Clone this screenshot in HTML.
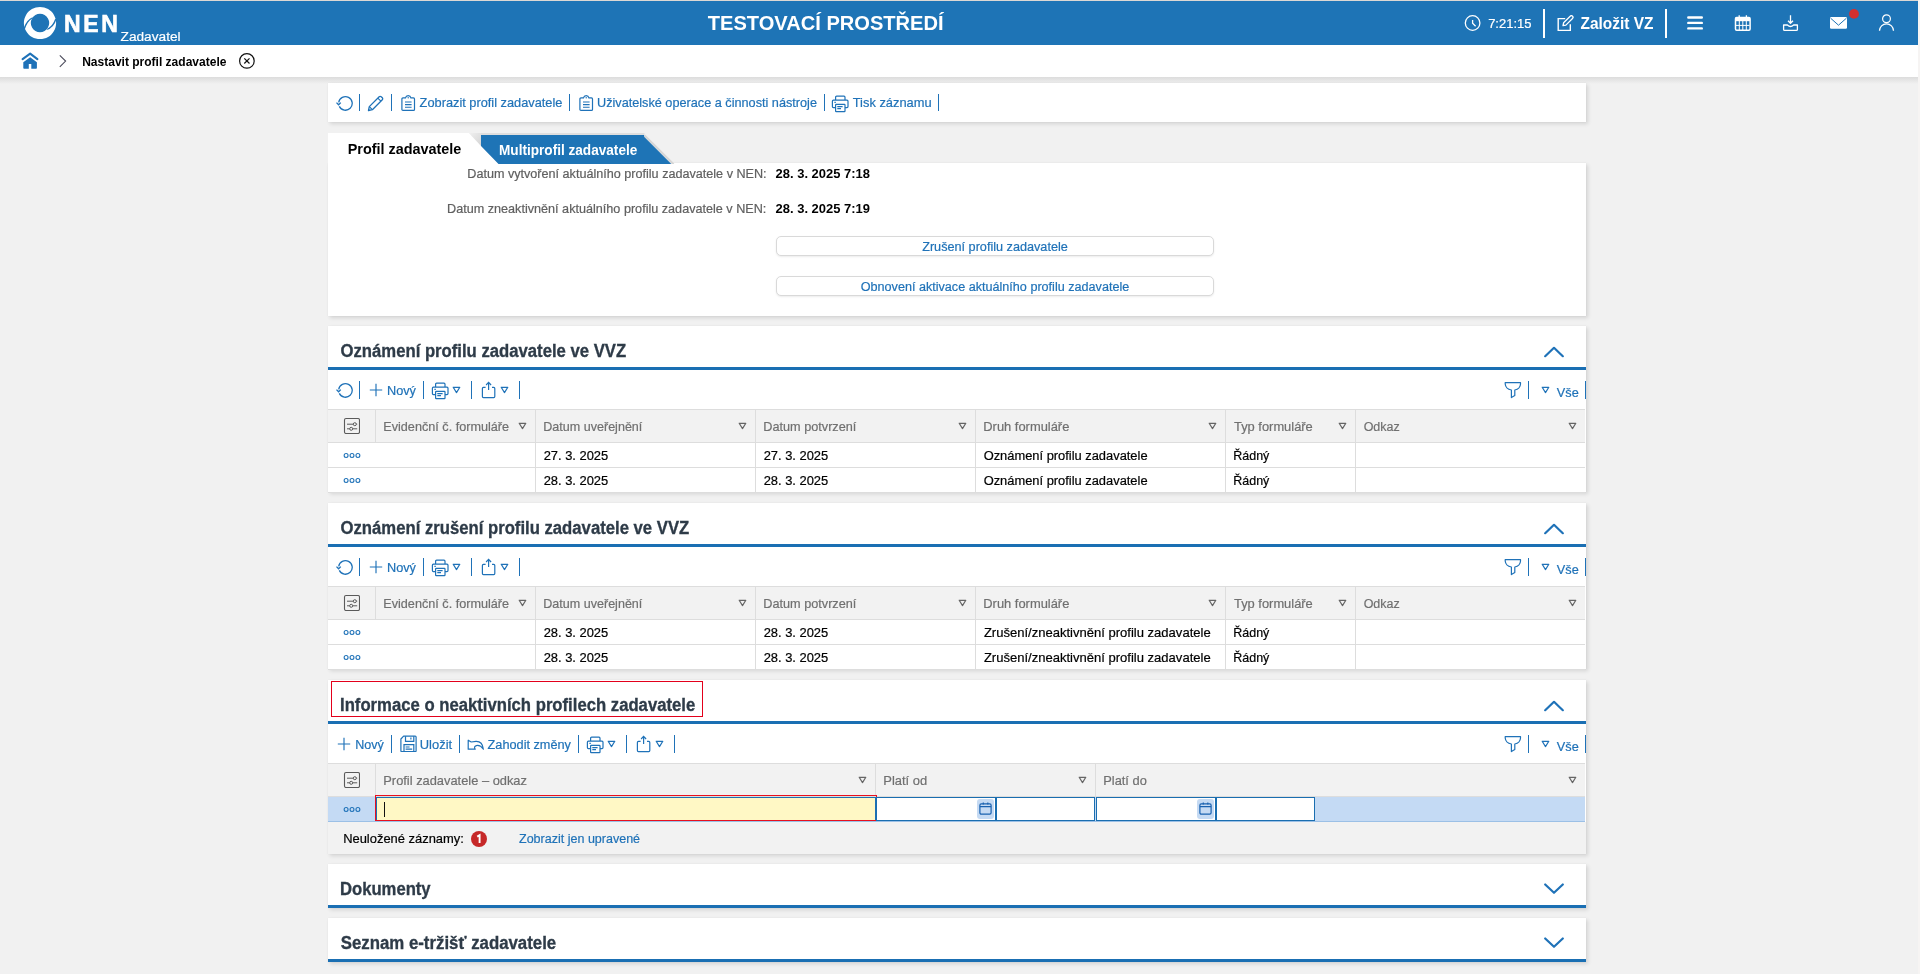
<!DOCTYPE html><html><head><meta charset="utf-8"><style>html,body{margin:0;padding:0;width:1920px;height:974px;overflow:hidden;font-family:"Liberation Sans",sans-serif;-webkit-font-smoothing:antialiased}#root{position:absolute;left:0;top:0;width:1920px;height:974px;will-change:transform}</style></head><body><div id="root"><div style="position:absolute;left:0;top:0;width:1920px;height:974px;background:#f1f1f1"></div>
<div style="position:absolute;left:0px;top:0px;width:1920px;height:1px;background:#dcd8d4"></div>
<div style="position:absolute;left:0px;top:1px;width:1918px;height:44px;background:#1e74b6"></div>
<div style="position:absolute;left:1918px;top:0px;width:2px;height:974px;background:#f6f4f3"></div>
<svg style="position:absolute;left:20px;top:4px" width="40" height="40" viewBox="0 0 40 40"><path fill="#fff" fill-rule="evenodd" d="M20 2.9a16.1 16.1 0 1 0 0.001 0zM20 9.8a9.2 9.2 0 1 0 0.001 0z"/><path d="M3.6 24.2 Q6.6 15.6 12.8 13.0 L12.2 14.6 Q7.4 17.6 4.8 25.4Z" fill="#1e74b6"/><path d="M36.4 15.6 Q33.8 24.2 26.8 25.9 L27.6 24.4 Q32.8 21.8 35.2 14.8Z" fill="#1e74b6"/></svg>
<div style="position:absolute;top:10px;font-size:23px;line-height:28px;font-weight:bold;color:#fff;white-space:nowrap;left:64.00px;letter-spacing:2.7px;-webkit-text-stroke:0.6px #fff;">NEN</div>
<div style="position:absolute;top:29px;font-size:13.67px;line-height:16px;font-weight:normal;color:#fff;white-space:nowrap;-webkit-text-stroke:0.2px #fff;left:120.59px;">Zadavatel</div>
<div style="position:absolute;top:11px;font-size:20.09px;line-height:24px;font-weight:bold;color:#fff;white-space:nowrap;left:707.80px;">TESTOVACÍ PROSTŘEDÍ</div>
<svg style="position:absolute;left:1464px;top:15px" width="17" height="17" viewBox="0 0 17 17"><circle cx="8.6" cy="8" r="7.3" stroke="#fff" stroke-width="1.3" fill="none"/><path d="M8.6 5V8.2L11.6 11.2" stroke="#fff" stroke-width="1.3" fill="none"/></svg>
<div style="position:absolute;top:16px;font-size:12.98px;line-height:16px;font-weight:normal;color:#fff;white-space:nowrap;-webkit-text-stroke:0.2px #fff;left:1488.15px;">7:21:15</div>
<div style="position:absolute;left:1543px;top:9px;width:2px;height:29px;background:#fff"></div>
<svg style="position:absolute;left:1557px;top:15px" width="17" height="17" viewBox="0 0 17 17"><path d="M8.2 3.6H1.2V15.4H13.3V9.2" stroke="#fff" stroke-width="1.4" fill="none"/><path d="M6 10.6L6.6 7.8L13.2 1.2A1.5 1.5 0 0 1 15.5 3.5L8.9 10.1Z" stroke="#fff" stroke-width="1.3" fill="none" stroke-linejoin="round"/></svg>
<div style="position:absolute;top:14px;font-size:15.45px;line-height:19px;font-weight:bold;color:#fff;white-space:nowrap;left:1580.54px;transform:scaleY(1.1);transform-origin:0 15px;">Založit VZ</div>
<div style="position:absolute;left:1665px;top:9px;width:2px;height:29px;background:#fff"></div>
<svg style="position:absolute;left:1686px;top:14px" width="18" height="17" viewBox="0 0 18 17"><path d="M2.3 3.5H15.8M2.3 8.9H15.8M2.3 14.4H15.8" stroke="#fff" stroke-width="2.4" stroke-linecap="round"/></svg>
<svg style="position:absolute;left:1733px;top:14px" width="19" height="18" viewBox="0 0 19 18"><rect x="2.5" y="3.6" width="14.6" height="12.6" rx="1.2" stroke="#fff" stroke-width="1.5" fill="none"/><rect x="2.5" y="3.6" width="14.6" height="3.6" fill="#fff"/><path d="M6.2 1.2V4M13.4 1.2V4" stroke="#fff" stroke-width="1.3"/><path d="M3 11.4H16.6M6.3 7V16M9.8 7V16M13.3 7V16" stroke="#fff" stroke-width="1"/></svg>
<svg style="position:absolute;left:1781px;top:14px" width="18" height="18" viewBox="0 0 18 18"><path d="M9.5 1.2V9.4M7 6.7L9.5 9.3L12 6.7" stroke="#fff" stroke-width="1.3" fill="none"/><path d="M2.6 11V15.4A1 1 0 0 0 3.6 16.4H15.4A1 1 0 0 0 16.4 15.4V11H12.6Q9.5 14 6.4 11Z" stroke="#fff" stroke-width="1.3" fill="none" stroke-linejoin="round"/></svg>
<svg style="position:absolute;left:1829px;top:16px" width="19" height="14" viewBox="0 0 19 14"><rect x="1" y="1" width="17" height="11.7" rx="1.2" fill="#fff"/><path d="M1.6 2.2L9.5 9.2L17.4 2.2" stroke="#1e74b6" stroke-width="1" fill="none"/></svg>
<svg style="position:absolute;left:1848px;top:8px" width="12" height="12" viewBox="0 0 12 12"><circle cx="6" cy="5.9" r="4.9" fill="#d32f2f"/></svg>
<svg style="position:absolute;left:1877px;top:14px" width="18" height="18" viewBox="0 0 18 18"><circle cx="9.5" cy="4.8" r="3.9" stroke="#fff" stroke-width="1.2" fill="none"/><path d="M2.5 16.8A7 7 0 0 1 16.5 16.8" stroke="#fff" stroke-width="1.3" fill="none"/></svg>
<div style="position:absolute;left:0px;top:45px;width:1918px;height:32px;background:#fff"></div>
<div style="position:absolute;left:0px;top:77px;width:1918px;height:7px;background:linear-gradient(#dcdcdc,#f1f1f1)"></div>
<svg style="position:absolute;left:21px;top:52px" width="18" height="18" viewBox="0 0 18 18"><path d="M1.6 7.2L9.15 1.7L16.4 7.2" stroke="#1f72b8" stroke-width="2.1" fill="none" stroke-linecap="round" stroke-linejoin="round"/><path d="M2.3 10.2L9.15 5.3L15.9 10.2V16A0.8 0.8 0 0 1 15.1 16.8H10.3V11.9H7.8V16.8H3.1A0.8 0.8 0 0 1 2.3 16Z" fill="#1f72b8"/></svg>
<svg style="position:absolute;left:57px;top:54px" width="12" height="14" viewBox="0 0 12 14"><path d="M2.8 1.3L8.6 7.1L2.8 12.8" stroke="#4a4a5a" stroke-width="1.1" fill="none"/></svg>
<div style="position:absolute;top:55px;font-size:12.02px;line-height:14px;font-weight:bold;color:#000;white-space:nowrap;left:82.16px;">Nastavit profil zadavatele</div>
<svg style="position:absolute;left:238px;top:52px" width="18" height="18" viewBox="0 0 18 18"><circle cx="8.9" cy="8.9" r="7.3" stroke="#111" stroke-width="1.2" fill="none"/><path d="M6.3 6.3L11.5 11.5M11.5 6.3L6.3 11.5" stroke="#111" stroke-width="1.2"/></svg>
<div style="position:absolute;left:328px;top:83px;width:1258px;height:39px;background:#fff;box-shadow:2px 2px 4px rgba(0,0,0,.12),0 0 1px rgba(0,0,0,.07)"></div>
<svg style="position:absolute;left:336px;top:95px" width="17" height="17" viewBox="0 0 17 17"><path d="M2.7 7.4A6.8 6.8 0 1 1 3.3 11.4" stroke="#1f72b8" stroke-width="1.3" fill="none"/><path d="M0.5 7.6L2.6 9.8L4.8 7.6" stroke="#1f72b8" stroke-width="1.3" fill="none"/></svg>
<div style="position:absolute;left:359px;top:94px;width:1px;height:17px;background:#1f72b8"></div>
<svg style="position:absolute;left:367px;top:95px" width="17" height="17" viewBox="0 0 17 17"><path d="M1.5 15.5L2.3 11.6L12.2 1.7A1.4 1.4 0 0 1 14.2 1.7L15.3 2.8A1.4 1.4 0 0 1 15.3 4.8L5.4 14.7Z" stroke="#1f72b8" stroke-width="1.3" fill="none" stroke-linejoin="round"/><path d="M10.8 3.1L13.9 6.2M2.6 11.9L5.1 14.4" stroke="#1f72b8" stroke-width="1.1"/></svg>
<div style="position:absolute;left:391px;top:94px;width:1px;height:17px;background:#1f72b8"></div>
<svg style="position:absolute;left:401px;top:94.5px" width="15" height="17" viewBox="0 0 15 17"><path d="M0.9 14.4V3.9A1 1 0 0 1 1.9 2.9H4.5Q5 0.7 7.2 0.7Q9.4 0.7 9.9 2.9H12.5A1 1 0 0 1 13.5 3.9V14.4A1 1 0 0 1 12.5 15.4H1.9A1 1 0 0 1 0.9 14.4Z" stroke="#1f72b8" stroke-width="1.2" fill="none"/><circle cx="7.2" cy="2.7" r="0.7" fill="#1f72b8"/><path d="M4 7H10.6M4 9.6H10.6M4 12.2H10.6" stroke="#1f72b8" stroke-width="1.1"/></svg>
<div style="position:absolute;top:95px;font-size:12.79px;line-height:15px;font-weight:normal;color:#1f72b8;white-space:nowrap;-webkit-text-stroke:0.2px #1f72b8;left:419.62px;">Zobrazit profil zadavatele</div>
<div style="position:absolute;left:569px;top:94px;width:1px;height:17px;background:#1f72b8"></div>
<svg style="position:absolute;left:579px;top:94.5px" width="15" height="17" viewBox="0 0 15 17"><path d="M0.9 14.4V3.9A1 1 0 0 1 1.9 2.9H4.5Q5 0.7 7.2 0.7Q9.4 0.7 9.9 2.9H12.5A1 1 0 0 1 13.5 3.9V14.4A1 1 0 0 1 12.5 15.4H1.9A1 1 0 0 1 0.9 14.4Z" stroke="#1f72b8" stroke-width="1.2" fill="none"/><circle cx="7.2" cy="2.7" r="0.7" fill="#1f72b8"/><path d="M4 7H10.6M4 9.6H10.6M4 12.2H10.6" stroke="#1f72b8" stroke-width="1.1"/></svg>
<div style="position:absolute;top:96px;font-size:12.7px;line-height:15px;font-weight:normal;color:#1f72b8;white-space:nowrap;-webkit-text-stroke:0.2px #1f72b8;left:596.98px;">Uživatelské operace a činnosti nástroje</div>
<div style="position:absolute;left:824px;top:94px;width:1px;height:17px;background:#1f72b8"></div>
<svg style="position:absolute;left:831px;top:94.6px" width="18" height="18" viewBox="0 0 18 18"><path d="M4.6 5.2V2.2A1 1 0 0 1 5.6 1.2H13A1 1 0 0 1 14 2.2V5.2M4.6 12.6H2.4A1 1 0 0 1 1.4 11.6V6.2A1 1 0 0 1 2.4 5.2H16A1 1 0 0 1 17 6.2V11.6A1 1 0 0 1 16 12.6H14" stroke="#1f72b8" stroke-width="1.2" fill="none"/><rect x="4.6" y="9.4" width="9.4" height="7.2" rx="0.6" stroke="#1f72b8" stroke-width="1.2" fill="none"/><path d="M6.3 11.6H11.6M6.3 13.6H10M3.4 7.4H4.8" stroke="#1f72b8" stroke-width="1.1"/></svg>
<div style="position:absolute;top:95px;font-size:12.86px;line-height:15px;font-weight:normal;color:#1f72b8;white-space:nowrap;-webkit-text-stroke:0.2px #1f72b8;left:852.74px;">Tisk záznamu</div>
<div style="position:absolute;left:938px;top:94px;width:1px;height:17px;background:#1f72b8"></div>
<div style="position:absolute;left:328px;top:163px;width:1258px;height:153px;background:#fff;box-shadow:2px 2px 4px rgba(0,0,0,.12),0 0 1px rgba(0,0,0,.07)"></div>
<svg style="position:absolute;left:328px;top:130px" width="360" height="34" viewBox="0 0 360 34"><defs><linearGradient id="tg" x1="0" y1="0" x2="1" y2="1"><stop offset="0" stop-color="#f0f0f0"/><stop offset="1" stop-color="#d4d4d4"/></linearGradient></defs><path d="M0 3H141L171 34H0Z" fill="#fff"/><path d="M141 3H153V16Z" fill="url(#tg)"/><path d="M153 3H316.5V5H153Z" fill="#dedede"/><path d="M316.5 5.5L345.5 34.2" stroke="#d6d6d6" stroke-width="2.2" fill="none"/><path d="M153 5H316.1V6.8L343.3 34H170.5L153 16Z" fill="#1e74b6"/></svg>
<div style="position:absolute;top:141px;font-size:14.42px;line-height:17px;font-weight:bold;color:#000;white-space:nowrap;left:347.69px;">Profil zadavatele</div>
<div style="position:absolute;top:143px;font-size:13.6px;line-height:16px;font-weight:bold;color:#fff;white-space:nowrap;left:499.05px;transform:scaleY(1.1);transform-origin:0 12px;">Multiprofil zadavatele</div>
<div style="position:absolute;top:167px;font-size:12.62px;line-height:15px;font-weight:normal;color:#606060;white-space:nowrap;-webkit-text-stroke:0.2px #606060;right:1153.43px;">Datum vytvoření aktuálního profilu zadavatele v NEN:</div>
<div style="position:absolute;top:166px;font-size:12.95px;line-height:16px;font-weight:bold;color:#000;white-space:nowrap;left:775.61px;">28. 3. 2025 7:18</div>
<div style="position:absolute;top:202px;font-size:12.63px;line-height:15px;font-weight:normal;color:#606060;white-space:nowrap;-webkit-text-stroke:0.2px #606060;right:1153.66px;">Datum zneaktivnění aktuálního profilu zadavatele v NEN:</div>
<div style="position:absolute;top:201px;font-size:12.96px;line-height:16px;font-weight:bold;color:#000;white-space:nowrap;left:775.61px;">28. 3. 2025 7:19</div>
<div style="position:absolute;left:776px;top:236px;width:438px;height:20px;box-sizing:border-box;border:1px solid #d9d9d9;border-radius:5px;background:#fff;box-shadow:0 1px 2px rgba(0,0,0,.08)"></div>
<div style="position:absolute;top:240px;font-size:12.67px;line-height:15px;font-weight:normal;color:#1f72b8;white-space:nowrap;-webkit-text-stroke:0.2px #1f72b8;left:776px;width:438px;text-align:center;">Zrušení profilu zadavatele</div>
<div style="position:absolute;left:776px;top:276px;width:438px;height:20px;box-sizing:border-box;border:1px solid #d9d9d9;border-radius:5px;background:#fff;box-shadow:0 1px 2px rgba(0,0,0,.08)"></div>
<div style="position:absolute;top:280px;font-size:12.61px;line-height:15px;font-weight:normal;color:#1f72b8;white-space:nowrap;-webkit-text-stroke:0.2px #1f72b8;left:776px;width:438px;text-align:center;">Obnovení aktivace aktuálního profilu zadavatele</div>
<div style="position:absolute;left:328px;top:326px;width:1258px;height:166px;background:#fff;box-shadow:2px 2px 4px rgba(0,0,0,.12),0 0 1px rgba(0,0,0,.07)"></div>
<div style="position:absolute;top:342px;font-size:16.69px;line-height:20px;font-weight:bold;color:#2e3b48;white-space:nowrap;left:340.53px;transform:scaleY(1.1);transform-origin:0 15px;-webkit-text-stroke:0.3px #2e3b48;">Oznámení profilu zadavatele ve VVZ</div>
<div style="position:absolute;left:328px;top:367px;width:1258px;height:3px;background:#1a6fb3"></div>
<svg style="position:absolute;left:1544px;top:346px" width="20" height="12" viewBox="0 0 20 12"><path d="M1.2 10.2L10 1.8L18.8 10.2" stroke="#1f72b8" stroke-width="2.2" fill="none" stroke-linecap="round" stroke-linejoin="round"/></svg>
<svg style="position:absolute;left:336px;top:382px" width="17" height="17" viewBox="0 0 17 17"><path d="M2.7 7.4A6.8 6.8 0 1 1 3.3 11.4" stroke="#1f72b8" stroke-width="1.3" fill="none"/><path d="M0.5 7.6L2.6 9.8L4.8 7.6" stroke="#1f72b8" stroke-width="1.3" fill="none"/></svg>
<div style="position:absolute;left:359px;top:381px;width:1px;height:18px;background:#1f72b8"></div>
<svg style="position:absolute;left:369px;top:383px" width="14" height="14" viewBox="0 0 14 14"><path d="M7 0.8V13.2M0.8 7H13.2" stroke="#1f72b8" stroke-width="1.15"/></svg>
<div style="position:absolute;top:383px;font-size:12.73px;line-height:15px;font-weight:normal;color:#1f72b8;white-space:nowrap;-webkit-text-stroke:0.2px #1f72b8;left:386.98px;">Nový</div>
<div style="position:absolute;left:423px;top:381px;width:1px;height:18px;background:#1f72b8"></div>
<svg style="position:absolute;left:431px;top:381.6px" width="18" height="18" viewBox="0 0 18 18"><path d="M4.6 5.2V2.2A1 1 0 0 1 5.6 1.2H13A1 1 0 0 1 14 2.2V5.2M4.6 12.6H2.4A1 1 0 0 1 1.4 11.6V6.2A1 1 0 0 1 2.4 5.2H16A1 1 0 0 1 17 6.2V11.6A1 1 0 0 1 16 12.6H14" stroke="#1f72b8" stroke-width="1.2" fill="none"/><rect x="4.6" y="9.4" width="9.4" height="7.2" rx="0.6" stroke="#1f72b8" stroke-width="1.2" fill="none"/><path d="M6.3 11.6H11.6M6.3 13.6H10M3.4 7.4H4.8" stroke="#1f72b8" stroke-width="1.1"/></svg>
<svg style="position:absolute;left:452px;top:386px" width="9" height="8" viewBox="0 0 9 8"><path d="M1.2 1.3H7.8L4.5 6.6Z" stroke="#1f72b8" stroke-width="1.2" fill="none" stroke-linejoin="round"/></svg>
<div style="position:absolute;left:471px;top:381px;width:1px;height:18px;background:#1f72b8"></div>
<svg style="position:absolute;left:481px;top:381px" width="15" height="18" viewBox="0 0 15 18"><path d="M4.6 6.4H2.4A1 1 0 0 0 1.4 7.4V15.6A1 1 0 0 0 2.4 16.6H12.8A1 1 0 0 0 13.8 15.6V7.4A1 1 0 0 0 12.8 6.4H11M7.6 9V1.5M5.1 4L7.6 1.4L10.1 4" stroke="#1f72b8" stroke-width="1.2" fill="none"/></svg>
<svg style="position:absolute;left:500px;top:386px" width="9" height="8" viewBox="0 0 9 8"><path d="M1.2 1.3H7.8L4.5 6.6Z" stroke="#1f72b8" stroke-width="1.2" fill="none" stroke-linejoin="round"/></svg>
<div style="position:absolute;left:519px;top:381px;width:1px;height:18px;background:#1f72b8"></div>
<svg style="position:absolute;left:1503px;top:380px" width="20" height="20" viewBox="0 0 20 20"><path d="M2.2 2.6H17.5V4Q17.2 9 11.8 10V15.6L8.4 17.6V10Q2.6 9 2.2 4Z" stroke="#1f72b8" stroke-width="1.2" fill="none" stroke-linejoin="round"/></svg>
<div style="position:absolute;left:1528px;top:381px;width:1px;height:18px;background:#1f72b8"></div>
<svg style="position:absolute;left:1541px;top:386px" width="9" height="8" viewBox="0 0 9 8"><path d="M1.2 1.3H7.8L4.5 6.6Z" stroke="#1f72b8" stroke-width="1.2" fill="none" stroke-linejoin="round"/></svg>
<div style="position:absolute;top:386px;font-size:12.69px;line-height:15px;font-weight:normal;color:#1f72b8;white-space:nowrap;-webkit-text-stroke:0.2px #1f72b8;left:1556.87px;">Vše</div>
<div style="position:absolute;left:1585px;top:381px;width:1px;height:18px;background:#1f72b8"></div>
<div style="position:absolute;left:328px;top:409px;width:1257px;height:34px;background:#f2f2f2;box-sizing:border-box;border-top:1px solid #dddddd;border-bottom:1px solid #dddddd"></div>
<svg style="position:absolute;left:342.5px;top:416.8px" width="17" height="17" viewBox="0 0 17 17"><rect x="1.5" y="1.5" width="15" height="15" rx="1.5" stroke="#5a5a5a" stroke-width="1.1" fill="none"/><path d="M4 7.2H14.2M4 11.8H14.2" stroke="#5a5a5a" stroke-width="1"/><circle cx="11.8" cy="7.2" r="1.5" fill="#f2f2f2" stroke="#5a5a5a" stroke-width="1"/><circle cx="8.2" cy="11.8" r="1.5" fill="#f2f2f2" stroke="#5a5a5a" stroke-width="1"/></svg>
<div style="position:absolute;left:375px;top:409px;width:1px;height:33px;background:#dddddd"></div>
<div style="position:absolute;top:420px;font-size:12.65px;line-height:15px;font-weight:normal;color:#707070;white-space:nowrap;-webkit-text-stroke:0.2px #707070;left:383.29px;">Evidenční č. formuláře</div>
<svg style="position:absolute;left:518px;top:422px" width="9" height="8" viewBox="0 0 9 8"><path d="M1.2 1.3H7.8L4.5 6.6Z" stroke="#666" stroke-width="1.2" fill="none" stroke-linejoin="round"/></svg>
<div style="position:absolute;left:535px;top:409px;width:1px;height:33px;background:#dddddd"></div>
<div style="position:absolute;top:420px;font-size:12.56px;line-height:15px;font-weight:normal;color:#707070;white-space:nowrap;-webkit-text-stroke:0.2px #707070;left:543.30px;">Datum uveřejnění</div>
<svg style="position:absolute;left:738px;top:422px" width="9" height="8" viewBox="0 0 9 8"><path d="M1.2 1.3H7.8L4.5 6.6Z" stroke="#666" stroke-width="1.2" fill="none" stroke-linejoin="round"/></svg>
<div style="position:absolute;left:755px;top:409px;width:1px;height:33px;background:#dddddd"></div>
<div style="position:absolute;top:420px;font-size:12.69px;line-height:15px;font-weight:normal;color:#707070;white-space:nowrap;-webkit-text-stroke:0.2px #707070;left:763.28px;">Datum potvrzení</div>
<svg style="position:absolute;left:958px;top:422px" width="9" height="8" viewBox="0 0 9 8"><path d="M1.2 1.3H7.8L4.5 6.6Z" stroke="#666" stroke-width="1.2" fill="none" stroke-linejoin="round"/></svg>
<div style="position:absolute;left:975px;top:409px;width:1px;height:33px;background:#dddddd"></div>
<div style="position:absolute;top:419px;font-size:12.91px;line-height:15px;font-weight:normal;color:#707070;white-space:nowrap;-webkit-text-stroke:0.2px #707070;left:983.27px;">Druh formuláře</div>
<svg style="position:absolute;left:1208px;top:422px" width="9" height="8" viewBox="0 0 9 8"><path d="M1.2 1.3H7.8L4.5 6.6Z" stroke="#666" stroke-width="1.2" fill="none" stroke-linejoin="round"/></svg>
<div style="position:absolute;left:1225px;top:409px;width:1px;height:33px;background:#dddddd"></div>
<div style="position:absolute;top:419px;font-size:12.89px;line-height:15px;font-weight:normal;color:#707070;white-space:nowrap;-webkit-text-stroke:0.2px #707070;left:1234.04px;">Typ formuláře</div>
<svg style="position:absolute;left:1338px;top:422px" width="9" height="8" viewBox="0 0 9 8"><path d="M1.2 1.3H7.8L4.5 6.6Z" stroke="#666" stroke-width="1.2" fill="none" stroke-linejoin="round"/></svg>
<div style="position:absolute;left:1355px;top:409px;width:1px;height:33px;background:#dddddd"></div>
<div style="position:absolute;top:420px;font-size:12.47px;line-height:15px;font-weight:normal;color:#707070;white-space:nowrap;-webkit-text-stroke:0.2px #707070;left:1363.68px;">Odkaz</div>
<svg style="position:absolute;left:1568px;top:422px" width="9" height="8" viewBox="0 0 9 8"><path d="M1.2 1.3H7.8L4.5 6.6Z" stroke="#666" stroke-width="1.2" fill="none" stroke-linejoin="round"/></svg>
<div style="position:absolute;left:328px;top:443px;width:1257px;height:24px;background:#fff"></div>
<div style="position:absolute;left:328px;top:467px;width:1257px;height:1px;background:#dddddd"></div>
<svg style="position:absolute;left:343px;top:451.5px" width="18" height="7" viewBox="0 0 18 7"><circle cx="3.1" cy="3.5" r="1.95" stroke="#1f72b8" stroke-width="1.1" fill="none"/><circle cx="9" cy="3.5" r="1.95" stroke="#1f72b8" stroke-width="1.1" fill="none"/><circle cx="14.9" cy="3.5" r="1.95" stroke="#1f72b8" stroke-width="1.1" fill="none"/></svg>
<div style="position:absolute;left:535px;top:443px;width:1px;height:24px;background:#dddddd"></div>
<div style="position:absolute;top:448px;font-size:12.91px;line-height:15px;font-weight:normal;color:#000;white-space:nowrap;-webkit-text-stroke:0.2px #000;left:543.65px;">27. 3. 2025</div>
<div style="position:absolute;left:755px;top:443px;width:1px;height:24px;background:#dddddd"></div>
<div style="position:absolute;top:448px;font-size:12.91px;line-height:15px;font-weight:normal;color:#000;white-space:nowrap;-webkit-text-stroke:0.2px #000;left:763.65px;">27. 3. 2025</div>
<div style="position:absolute;left:975px;top:443px;width:1px;height:24px;background:#dddddd"></div>
<div style="position:absolute;top:448px;font-size:12.88px;line-height:15px;font-weight:normal;color:#000;white-space:nowrap;-webkit-text-stroke:0.2px #000;left:983.66px;">Oznámení profilu zadavatele</div>
<div style="position:absolute;left:1225px;top:443px;width:1px;height:24px;background:#dddddd"></div>
<div style="position:absolute;top:449px;font-size:12.46px;line-height:15px;font-weight:normal;color:#000;white-space:nowrap;-webkit-text-stroke:0.2px #000;left:1233.30px;">Řádný</div>
<div style="position:absolute;left:1355px;top:443px;width:1px;height:24px;background:#dddddd"></div>
<div style="position:absolute;left:328px;top:468px;width:1257px;height:24px;background:#fff"></div>
<div style="position:absolute;left:328px;top:492px;width:1257px;height:1px;background:#dddddd"></div>
<svg style="position:absolute;left:343px;top:476.5px" width="18" height="7" viewBox="0 0 18 7"><circle cx="3.1" cy="3.5" r="1.95" stroke="#1f72b8" stroke-width="1.1" fill="none"/><circle cx="9" cy="3.5" r="1.95" stroke="#1f72b8" stroke-width="1.1" fill="none"/><circle cx="14.9" cy="3.5" r="1.95" stroke="#1f72b8" stroke-width="1.1" fill="none"/></svg>
<div style="position:absolute;left:535px;top:468px;width:1px;height:24px;background:#dddddd"></div>
<div style="position:absolute;top:473px;font-size:12.91px;line-height:15px;font-weight:normal;color:#000;white-space:nowrap;-webkit-text-stroke:0.2px #000;left:543.65px;">28. 3. 2025</div>
<div style="position:absolute;left:755px;top:468px;width:1px;height:24px;background:#dddddd"></div>
<div style="position:absolute;top:473px;font-size:12.91px;line-height:15px;font-weight:normal;color:#000;white-space:nowrap;-webkit-text-stroke:0.2px #000;left:763.65px;">28. 3. 2025</div>
<div style="position:absolute;left:975px;top:468px;width:1px;height:24px;background:#dddddd"></div>
<div style="position:absolute;top:473px;font-size:12.88px;line-height:15px;font-weight:normal;color:#000;white-space:nowrap;-webkit-text-stroke:0.2px #000;left:983.66px;">Oznámení profilu zadavatele</div>
<div style="position:absolute;left:1225px;top:468px;width:1px;height:24px;background:#dddddd"></div>
<div style="position:absolute;top:474px;font-size:12.46px;line-height:15px;font-weight:normal;color:#000;white-space:nowrap;-webkit-text-stroke:0.2px #000;left:1233.30px;">Řádný</div>
<div style="position:absolute;left:1355px;top:468px;width:1px;height:24px;background:#dddddd"></div>
<div style="position:absolute;left:328px;top:503px;width:1258px;height:166px;background:#fff;box-shadow:2px 2px 4px rgba(0,0,0,.12),0 0 1px rgba(0,0,0,.07)"></div>
<div style="position:absolute;top:519px;font-size:16.69px;line-height:20px;font-weight:bold;color:#2e3b48;white-space:nowrap;left:340.53px;transform:scaleY(1.1);transform-origin:0 15px;-webkit-text-stroke:0.3px #2e3b48;">Oznámení zrušení profilu zadavatele ve VVZ</div>
<div style="position:absolute;left:328px;top:544px;width:1258px;height:3px;background:#1a6fb3"></div>
<svg style="position:absolute;left:1544px;top:523px" width="20" height="12" viewBox="0 0 20 12"><path d="M1.2 10.2L10 1.8L18.8 10.2" stroke="#1f72b8" stroke-width="2.2" fill="none" stroke-linecap="round" stroke-linejoin="round"/></svg>
<svg style="position:absolute;left:336px;top:559px" width="17" height="17" viewBox="0 0 17 17"><path d="M2.7 7.4A6.8 6.8 0 1 1 3.3 11.4" stroke="#1f72b8" stroke-width="1.3" fill="none"/><path d="M0.5 7.6L2.6 9.8L4.8 7.6" stroke="#1f72b8" stroke-width="1.3" fill="none"/></svg>
<div style="position:absolute;left:359px;top:558px;width:1px;height:18px;background:#1f72b8"></div>
<svg style="position:absolute;left:369px;top:560px" width="14" height="14" viewBox="0 0 14 14"><path d="M7 0.8V13.2M0.8 7H13.2" stroke="#1f72b8" stroke-width="1.15"/></svg>
<div style="position:absolute;top:560px;font-size:12.73px;line-height:15px;font-weight:normal;color:#1f72b8;white-space:nowrap;-webkit-text-stroke:0.2px #1f72b8;left:386.98px;">Nový</div>
<div style="position:absolute;left:423px;top:558px;width:1px;height:18px;background:#1f72b8"></div>
<svg style="position:absolute;left:431px;top:558.6px" width="18" height="18" viewBox="0 0 18 18"><path d="M4.6 5.2V2.2A1 1 0 0 1 5.6 1.2H13A1 1 0 0 1 14 2.2V5.2M4.6 12.6H2.4A1 1 0 0 1 1.4 11.6V6.2A1 1 0 0 1 2.4 5.2H16A1 1 0 0 1 17 6.2V11.6A1 1 0 0 1 16 12.6H14" stroke="#1f72b8" stroke-width="1.2" fill="none"/><rect x="4.6" y="9.4" width="9.4" height="7.2" rx="0.6" stroke="#1f72b8" stroke-width="1.2" fill="none"/><path d="M6.3 11.6H11.6M6.3 13.6H10M3.4 7.4H4.8" stroke="#1f72b8" stroke-width="1.1"/></svg>
<svg style="position:absolute;left:452px;top:563px" width="9" height="8" viewBox="0 0 9 8"><path d="M1.2 1.3H7.8L4.5 6.6Z" stroke="#1f72b8" stroke-width="1.2" fill="none" stroke-linejoin="round"/></svg>
<div style="position:absolute;left:471px;top:558px;width:1px;height:18px;background:#1f72b8"></div>
<svg style="position:absolute;left:481px;top:558px" width="15" height="18" viewBox="0 0 15 18"><path d="M4.6 6.4H2.4A1 1 0 0 0 1.4 7.4V15.6A1 1 0 0 0 2.4 16.6H12.8A1 1 0 0 0 13.8 15.6V7.4A1 1 0 0 0 12.8 6.4H11M7.6 9V1.5M5.1 4L7.6 1.4L10.1 4" stroke="#1f72b8" stroke-width="1.2" fill="none"/></svg>
<svg style="position:absolute;left:500px;top:563px" width="9" height="8" viewBox="0 0 9 8"><path d="M1.2 1.3H7.8L4.5 6.6Z" stroke="#1f72b8" stroke-width="1.2" fill="none" stroke-linejoin="round"/></svg>
<div style="position:absolute;left:519px;top:558px;width:1px;height:18px;background:#1f72b8"></div>
<svg style="position:absolute;left:1503px;top:557px" width="20" height="20" viewBox="0 0 20 20"><path d="M2.2 2.6H17.5V4Q17.2 9 11.8 10V15.6L8.4 17.6V10Q2.6 9 2.2 4Z" stroke="#1f72b8" stroke-width="1.2" fill="none" stroke-linejoin="round"/></svg>
<div style="position:absolute;left:1528px;top:558px;width:1px;height:18px;background:#1f72b8"></div>
<svg style="position:absolute;left:1541px;top:563px" width="9" height="8" viewBox="0 0 9 8"><path d="M1.2 1.3H7.8L4.5 6.6Z" stroke="#1f72b8" stroke-width="1.2" fill="none" stroke-linejoin="round"/></svg>
<div style="position:absolute;top:563px;font-size:12.69px;line-height:15px;font-weight:normal;color:#1f72b8;white-space:nowrap;-webkit-text-stroke:0.2px #1f72b8;left:1556.87px;">Vše</div>
<div style="position:absolute;left:1585px;top:558px;width:1px;height:18px;background:#1f72b8"></div>
<div style="position:absolute;left:328px;top:586px;width:1257px;height:34px;background:#f2f2f2;box-sizing:border-box;border-top:1px solid #dddddd;border-bottom:1px solid #dddddd"></div>
<svg style="position:absolute;left:342.5px;top:593.8px" width="17" height="17" viewBox="0 0 17 17"><rect x="1.5" y="1.5" width="15" height="15" rx="1.5" stroke="#5a5a5a" stroke-width="1.1" fill="none"/><path d="M4 7.2H14.2M4 11.8H14.2" stroke="#5a5a5a" stroke-width="1"/><circle cx="11.8" cy="7.2" r="1.5" fill="#f2f2f2" stroke="#5a5a5a" stroke-width="1"/><circle cx="8.2" cy="11.8" r="1.5" fill="#f2f2f2" stroke="#5a5a5a" stroke-width="1"/></svg>
<div style="position:absolute;left:375px;top:586px;width:1px;height:33px;background:#dddddd"></div>
<div style="position:absolute;top:597px;font-size:12.65px;line-height:15px;font-weight:normal;color:#707070;white-space:nowrap;-webkit-text-stroke:0.2px #707070;left:383.29px;">Evidenční č. formuláře</div>
<svg style="position:absolute;left:518px;top:599px" width="9" height="8" viewBox="0 0 9 8"><path d="M1.2 1.3H7.8L4.5 6.6Z" stroke="#666" stroke-width="1.2" fill="none" stroke-linejoin="round"/></svg>
<div style="position:absolute;left:535px;top:586px;width:1px;height:33px;background:#dddddd"></div>
<div style="position:absolute;top:597px;font-size:12.56px;line-height:15px;font-weight:normal;color:#707070;white-space:nowrap;-webkit-text-stroke:0.2px #707070;left:543.30px;">Datum uveřejnění</div>
<svg style="position:absolute;left:738px;top:599px" width="9" height="8" viewBox="0 0 9 8"><path d="M1.2 1.3H7.8L4.5 6.6Z" stroke="#666" stroke-width="1.2" fill="none" stroke-linejoin="round"/></svg>
<div style="position:absolute;left:755px;top:586px;width:1px;height:33px;background:#dddddd"></div>
<div style="position:absolute;top:597px;font-size:12.69px;line-height:15px;font-weight:normal;color:#707070;white-space:nowrap;-webkit-text-stroke:0.2px #707070;left:763.28px;">Datum potvrzení</div>
<svg style="position:absolute;left:958px;top:599px" width="9" height="8" viewBox="0 0 9 8"><path d="M1.2 1.3H7.8L4.5 6.6Z" stroke="#666" stroke-width="1.2" fill="none" stroke-linejoin="round"/></svg>
<div style="position:absolute;left:975px;top:586px;width:1px;height:33px;background:#dddddd"></div>
<div style="position:absolute;top:596px;font-size:12.91px;line-height:15px;font-weight:normal;color:#707070;white-space:nowrap;-webkit-text-stroke:0.2px #707070;left:983.27px;">Druh formuláře</div>
<svg style="position:absolute;left:1208px;top:599px" width="9" height="8" viewBox="0 0 9 8"><path d="M1.2 1.3H7.8L4.5 6.6Z" stroke="#666" stroke-width="1.2" fill="none" stroke-linejoin="round"/></svg>
<div style="position:absolute;left:1225px;top:586px;width:1px;height:33px;background:#dddddd"></div>
<div style="position:absolute;top:596px;font-size:12.89px;line-height:15px;font-weight:normal;color:#707070;white-space:nowrap;-webkit-text-stroke:0.2px #707070;left:1234.04px;">Typ formuláře</div>
<svg style="position:absolute;left:1338px;top:599px" width="9" height="8" viewBox="0 0 9 8"><path d="M1.2 1.3H7.8L4.5 6.6Z" stroke="#666" stroke-width="1.2" fill="none" stroke-linejoin="round"/></svg>
<div style="position:absolute;left:1355px;top:586px;width:1px;height:33px;background:#dddddd"></div>
<div style="position:absolute;top:597px;font-size:12.47px;line-height:15px;font-weight:normal;color:#707070;white-space:nowrap;-webkit-text-stroke:0.2px #707070;left:1363.68px;">Odkaz</div>
<svg style="position:absolute;left:1568px;top:599px" width="9" height="8" viewBox="0 0 9 8"><path d="M1.2 1.3H7.8L4.5 6.6Z" stroke="#666" stroke-width="1.2" fill="none" stroke-linejoin="round"/></svg>
<div style="position:absolute;left:328px;top:620px;width:1257px;height:24px;background:#fff"></div>
<div style="position:absolute;left:328px;top:644px;width:1257px;height:1px;background:#dddddd"></div>
<svg style="position:absolute;left:343px;top:628.5px" width="18" height="7" viewBox="0 0 18 7"><circle cx="3.1" cy="3.5" r="1.95" stroke="#1f72b8" stroke-width="1.1" fill="none"/><circle cx="9" cy="3.5" r="1.95" stroke="#1f72b8" stroke-width="1.1" fill="none"/><circle cx="14.9" cy="3.5" r="1.95" stroke="#1f72b8" stroke-width="1.1" fill="none"/></svg>
<div style="position:absolute;left:535px;top:620px;width:1px;height:24px;background:#dddddd"></div>
<div style="position:absolute;top:625px;font-size:12.91px;line-height:15px;font-weight:normal;color:#000;white-space:nowrap;-webkit-text-stroke:0.2px #000;left:543.65px;">28. 3. 2025</div>
<div style="position:absolute;left:755px;top:620px;width:1px;height:24px;background:#dddddd"></div>
<div style="position:absolute;top:625px;font-size:12.91px;line-height:15px;font-weight:normal;color:#000;white-space:nowrap;-webkit-text-stroke:0.2px #000;left:763.65px;">28. 3. 2025</div>
<div style="position:absolute;left:975px;top:620px;width:1px;height:24px;background:#dddddd"></div>
<div style="position:absolute;top:625px;font-size:13.04px;line-height:16px;font-weight:normal;color:#000;white-space:nowrap;-webkit-text-stroke:0.2px #000;left:983.91px;">Zrušení/zneaktivnění profilu zadavatele</div>
<div style="position:absolute;left:1225px;top:620px;width:1px;height:24px;background:#dddddd"></div>
<div style="position:absolute;top:626px;font-size:12.46px;line-height:15px;font-weight:normal;color:#000;white-space:nowrap;-webkit-text-stroke:0.2px #000;left:1233.30px;">Řádný</div>
<div style="position:absolute;left:1355px;top:620px;width:1px;height:24px;background:#dddddd"></div>
<div style="position:absolute;left:328px;top:645px;width:1257px;height:24px;background:#fff"></div>
<div style="position:absolute;left:328px;top:669px;width:1257px;height:1px;background:#dddddd"></div>
<svg style="position:absolute;left:343px;top:653.5px" width="18" height="7" viewBox="0 0 18 7"><circle cx="3.1" cy="3.5" r="1.95" stroke="#1f72b8" stroke-width="1.1" fill="none"/><circle cx="9" cy="3.5" r="1.95" stroke="#1f72b8" stroke-width="1.1" fill="none"/><circle cx="14.9" cy="3.5" r="1.95" stroke="#1f72b8" stroke-width="1.1" fill="none"/></svg>
<div style="position:absolute;left:535px;top:645px;width:1px;height:24px;background:#dddddd"></div>
<div style="position:absolute;top:650px;font-size:12.91px;line-height:15px;font-weight:normal;color:#000;white-space:nowrap;-webkit-text-stroke:0.2px #000;left:543.65px;">28. 3. 2025</div>
<div style="position:absolute;left:755px;top:645px;width:1px;height:24px;background:#dddddd"></div>
<div style="position:absolute;top:650px;font-size:12.91px;line-height:15px;font-weight:normal;color:#000;white-space:nowrap;-webkit-text-stroke:0.2px #000;left:763.65px;">28. 3. 2025</div>
<div style="position:absolute;left:975px;top:645px;width:1px;height:24px;background:#dddddd"></div>
<div style="position:absolute;top:650px;font-size:13.04px;line-height:16px;font-weight:normal;color:#000;white-space:nowrap;-webkit-text-stroke:0.2px #000;left:983.91px;">Zrušení/zneaktivnění profilu zadavatele</div>
<div style="position:absolute;left:1225px;top:645px;width:1px;height:24px;background:#dddddd"></div>
<div style="position:absolute;top:651px;font-size:12.46px;line-height:15px;font-weight:normal;color:#000;white-space:nowrap;-webkit-text-stroke:0.2px #000;left:1233.30px;">Řádný</div>
<div style="position:absolute;left:1355px;top:645px;width:1px;height:24px;background:#dddddd"></div>
<div style="position:absolute;left:328px;top:680px;width:1258px;height:174px;background:#fff;box-shadow:2px 2px 4px rgba(0,0,0,.12),0 0 1px rgba(0,0,0,.07)"></div>
<div style="position:absolute;left:331px;top:681px;width:372px;height:36px;box-sizing:border-box;border:1px solid #e3001b"></div>
<div style="position:absolute;top:696px;font-size:16.69px;line-height:20px;font-weight:bold;color:#2e3b48;white-space:nowrap;left:340.03px;transform:scaleY(1.1);transform-origin:0 15px;-webkit-text-stroke:0.3px #2e3b48;">Informace o neaktivních profilech zadavatele</div>
<div style="position:absolute;left:328px;top:721px;width:1258px;height:3px;background:#1a6fb3"></div>
<svg style="position:absolute;left:1544px;top:700px" width="20" height="12" viewBox="0 0 20 12"><path d="M1.2 10.2L10 1.8L18.8 10.2" stroke="#1f72b8" stroke-width="2.2" fill="none" stroke-linecap="round" stroke-linejoin="round"/></svg>
<svg style="position:absolute;left:337px;top:737px" width="14" height="14" viewBox="0 0 14 14"><path d="M7 0.8V13.2M0.8 7H13.2" stroke="#1f72b8" stroke-width="1.15"/></svg>
<div style="position:absolute;top:738px;font-size:12.55px;line-height:15px;font-weight:normal;color:#1f72b8;white-space:nowrap;-webkit-text-stroke:0.2px #1f72b8;left:355.20px;">Nový</div>
<div style="position:absolute;left:391px;top:735px;width:1px;height:18px;background:#1f72b8"></div>
<svg style="position:absolute;left:400px;top:735.2px" width="17" height="17" viewBox="0 0 17 17"><path d="M3.6 1.2H15.2A0.9 0.9 0 0 1 16.1 2.1V15.8A0.9 0.9 0 0 1 15.2 16.7H1.8A0.9 0.9 0 0 1 0.9 15.8V4Z" stroke="#1f72b8" stroke-width="1.2" fill="none" stroke-linejoin="round"/><path d="M5.5 1.2V6.3H13.8V1.2M4 16.7V9.6H13.8V16.7" stroke="#1f72b8" stroke-width="1.2" fill="none"/><path d="M5.6 12H9.6M5.6 14.2H12.2M10.9 2.6V4.6" stroke="#1f72b8" stroke-width="1.2"/></svg>
<div style="position:absolute;top:737px;font-size:12.95px;line-height:16px;font-weight:normal;color:#1f72b8;white-space:nowrap;-webkit-text-stroke:0.2px #1f72b8;left:419.76px;">Uložit</div>
<div style="position:absolute;left:459px;top:735px;width:1px;height:18px;background:#1f72b8"></div>
<svg style="position:absolute;left:467px;top:738.5px" width="18" height="12" viewBox="0 0 18 12"><path d="M1.2 1.2V10.2H8.2Q6.4 7.6 9.4 6.6Q13.2 5.8 16.4 10.2Q15.4 2.2 9 2.4L4.2 3Z" stroke="#1f72b8" stroke-width="1.2" fill="none" stroke-linejoin="round"/></svg>
<div style="position:absolute;top:737px;font-size:12.71px;line-height:15px;font-weight:normal;color:#1f72b8;white-space:nowrap;-webkit-text-stroke:0.2px #1f72b8;left:487.62px;">Zahodit změny</div>
<div style="position:absolute;left:578px;top:735px;width:1px;height:18px;background:#1f72b8"></div>
<svg style="position:absolute;left:586px;top:735.6px" width="18" height="18" viewBox="0 0 18 18"><path d="M4.6 5.2V2.2A1 1 0 0 1 5.6 1.2H13A1 1 0 0 1 14 2.2V5.2M4.6 12.6H2.4A1 1 0 0 1 1.4 11.6V6.2A1 1 0 0 1 2.4 5.2H16A1 1 0 0 1 17 6.2V11.6A1 1 0 0 1 16 12.6H14" stroke="#1f72b8" stroke-width="1.2" fill="none"/><rect x="4.6" y="9.4" width="9.4" height="7.2" rx="0.6" stroke="#1f72b8" stroke-width="1.2" fill="none"/><path d="M6.3 11.6H11.6M6.3 13.6H10M3.4 7.4H4.8" stroke="#1f72b8" stroke-width="1.1"/></svg>
<svg style="position:absolute;left:607px;top:740px" width="9" height="8" viewBox="0 0 9 8"><path d="M1.2 1.3H7.8L4.5 6.6Z" stroke="#1f72b8" stroke-width="1.2" fill="none" stroke-linejoin="round"/></svg>
<div style="position:absolute;left:626px;top:735px;width:1px;height:18px;background:#1f72b8"></div>
<svg style="position:absolute;left:636px;top:735px" width="15" height="18" viewBox="0 0 15 18"><path d="M4.6 6.4H2.4A1 1 0 0 0 1.4 7.4V15.6A1 1 0 0 0 2.4 16.6H12.8A1 1 0 0 0 13.8 15.6V7.4A1 1 0 0 0 12.8 6.4H11M7.6 9V1.5M5.1 4L7.6 1.4L10.1 4" stroke="#1f72b8" stroke-width="1.2" fill="none"/></svg>
<svg style="position:absolute;left:655px;top:740px" width="9" height="8" viewBox="0 0 9 8"><path d="M1.2 1.3H7.8L4.5 6.6Z" stroke="#1f72b8" stroke-width="1.2" fill="none" stroke-linejoin="round"/></svg>
<div style="position:absolute;left:674px;top:735px;width:1px;height:18px;background:#1f72b8"></div>
<svg style="position:absolute;left:1503px;top:734px" width="20" height="20" viewBox="0 0 20 20"><path d="M2.2 2.6H17.5V4Q17.2 9 11.8 10V15.6L8.4 17.6V10Q2.6 9 2.2 4Z" stroke="#1f72b8" stroke-width="1.2" fill="none" stroke-linejoin="round"/></svg>
<div style="position:absolute;left:1528px;top:735px;width:1px;height:18px;background:#1f72b8"></div>
<svg style="position:absolute;left:1541px;top:740px" width="9" height="8" viewBox="0 0 9 8"><path d="M1.2 1.3H7.8L4.5 6.6Z" stroke="#1f72b8" stroke-width="1.2" fill="none" stroke-linejoin="round"/></svg>
<div style="position:absolute;top:740px;font-size:12.69px;line-height:15px;font-weight:normal;color:#1f72b8;white-space:nowrap;-webkit-text-stroke:0.2px #1f72b8;left:1556.87px;">Vše</div>
<div style="position:absolute;left:1585px;top:735px;width:1px;height:18px;background:#1f72b8"></div>
<div style="position:absolute;left:328px;top:763px;width:1257px;height:34px;background:#f2f2f2;box-sizing:border-box;border-top:1px solid #dddddd;border-bottom:1px solid #dddddd"></div>
<svg style="position:absolute;left:342.5px;top:770.8px" width="17" height="17" viewBox="0 0 17 17"><rect x="1.5" y="1.5" width="15" height="15" rx="1.5" stroke="#5a5a5a" stroke-width="1.1" fill="none"/><path d="M4 7.2H14.2M4 11.8H14.2" stroke="#5a5a5a" stroke-width="1"/><circle cx="11.8" cy="7.2" r="1.5" fill="#f2f2f2" stroke="#5a5a5a" stroke-width="1"/><circle cx="8.2" cy="11.8" r="1.5" fill="#f2f2f2" stroke="#5a5a5a" stroke-width="1"/></svg>
<div style="position:absolute;left:375px;top:763px;width:1px;height:33px;background:#dddddd"></div>
<div style="position:absolute;top:773px;font-size:12.86px;line-height:15px;font-weight:normal;color:#707070;white-space:nowrap;-webkit-text-stroke:0.2px #707070;left:383.27px;">Profil zadavatele – odkaz</div>
<svg style="position:absolute;left:858px;top:776px" width="9" height="8" viewBox="0 0 9 8"><path d="M1.2 1.3H7.8L4.5 6.6Z" stroke="#666" stroke-width="1.2" fill="none" stroke-linejoin="round"/></svg>
<div style="position:absolute;left:875px;top:763px;width:1px;height:33px;background:#dddddd"></div>
<div style="position:absolute;top:773px;font-size:12.96px;line-height:16px;font-weight:normal;color:#707070;white-space:nowrap;-webkit-text-stroke:0.2px #707070;left:883.26px;">Platí od</div>
<svg style="position:absolute;left:1078px;top:776px" width="9" height="8" viewBox="0 0 9 8"><path d="M1.2 1.3H7.8L4.5 6.6Z" stroke="#666" stroke-width="1.2" fill="none" stroke-linejoin="round"/></svg>
<div style="position:absolute;left:1095px;top:763px;width:1px;height:33px;background:#dddddd"></div>
<div style="position:absolute;top:773px;font-size:12.84px;line-height:15px;font-weight:normal;color:#707070;white-space:nowrap;-webkit-text-stroke:0.2px #707070;left:1103.27px;">Platí do</div>
<svg style="position:absolute;left:1568px;top:776px" width="9" height="8" viewBox="0 0 9 8"><path d="M1.2 1.3H7.8L4.5 6.6Z" stroke="#666" stroke-width="1.2" fill="none" stroke-linejoin="round"/></svg>
<div style="position:absolute;left:328px;top:797px;width:1257px;height:25px;background:#c4daf4;box-sizing:border-box;border-bottom:1px solid #9cc0e6"></div>
<svg style="position:absolute;left:343px;top:805.5px" width="18" height="7" viewBox="0 0 18 7"><circle cx="3.1" cy="3.5" r="1.95" stroke="#1f72b8" stroke-width="1.1" fill="none"/><circle cx="9" cy="3.5" r="1.95" stroke="#1f72b8" stroke-width="1.1" fill="none"/><circle cx="14.9" cy="3.5" r="1.95" stroke="#1f72b8" stroke-width="1.1" fill="none"/></svg>
<div style="position:absolute;left:375px;top:795px;width:502px;height:26px;box-sizing:border-box;border:1px solid #e8101e"></div>
<div style="position:absolute;left:376px;top:797px;width:500px;height:23px;box-sizing:border-box;border:1px solid #1d6fb4;border-bottom:none;background:#fff8c5"></div>
<div style="position:absolute;left:384px;top:802px;width:1.3px;height:15px;background:#111"></div>
<div style="position:absolute;left:876px;top:797px;width:120px;height:24px;box-sizing:border-box;border:1px solid #1a6eb0;background:#fff"></div>
<div style="position:absolute;left:977px;top:799px;width:17px;height:20px;background:#c5daf3;border-radius:3px"></div>
<svg style="position:absolute;left:979px;top:802px" width="13" height="13" viewBox="0 0 13 13"><rect x="0.9" y="1.9" width="11.2" height="10.2" rx="1.3" stroke="#1a62b0" stroke-width="1.2" fill="none"/><path d="M0.9 4.6H12.1M4.3 0.6V2.6M8.8 0.6V2.6" stroke="#1a62b0" stroke-width="1.2"/></svg>
<div style="position:absolute;left:996px;top:797px;width:99px;height:24px;box-sizing:border-box;border:1px solid #1a6eb0;background:#fff"></div>
<div style="position:absolute;left:1096px;top:797px;width:120px;height:24px;box-sizing:border-box;border:1px solid #1a6eb0;background:#fff"></div>
<div style="position:absolute;left:1197px;top:799px;width:17px;height:20px;background:#c5daf3;border-radius:3px"></div>
<svg style="position:absolute;left:1199px;top:802px" width="13" height="13" viewBox="0 0 13 13"><rect x="0.9" y="1.9" width="11.2" height="10.2" rx="1.3" stroke="#1a62b0" stroke-width="1.2" fill="none"/><path d="M0.9 4.6H12.1M4.3 0.6V2.6M8.8 0.6V2.6" stroke="#1a62b0" stroke-width="1.2"/></svg>
<div style="position:absolute;left:1216px;top:797px;width:99px;height:24px;box-sizing:border-box;border:1px solid #1a6eb0;background:#fff"></div>
<div style="position:absolute;left:328px;top:822px;width:1258px;height:32px;background:#f2f2f2"></div>
<div style="position:absolute;top:831px;font-size:12.93px;line-height:16px;font-weight:normal;color:#000;white-space:nowrap;-webkit-text-stroke:0.2px #000;left:343.17px;">Neuložené záznamy:</div>
<svg style="position:absolute;left:471px;top:831px" width="16" height="16" viewBox="0 0 16 16"><circle cx="8" cy="8" r="8" fill="#c62828"/><path d="M6.2 5.6L8.6 4.2V12" stroke="#fff" stroke-width="1.9" fill="none"/></svg>
<div style="position:absolute;top:832px;font-size:12.52px;line-height:15px;font-weight:normal;color:#1f72b8;white-space:nowrap;-webkit-text-stroke:0.2px #1f72b8;left:519.02px;">Zobrazit jen upravené</div>
<div style="position:absolute;left:328px;top:864px;width:1258px;height:44px;background:#fff;box-shadow:2px 2px 4px rgba(0,0,0,.12),0 0 1px rgba(0,0,0,.07)"></div>
<div style="position:absolute;top:880px;font-size:16.65px;line-height:20px;font-weight:bold;color:#2e3b48;white-space:nowrap;left:340.03px;transform:scaleY(1.1);transform-origin:0 15px;-webkit-text-stroke:0.3px #2e3b48;">Dokumenty</div>
<div style="position:absolute;left:328px;top:905px;width:1258px;height:3px;background:#1a6fb3"></div>
<svg style="position:absolute;left:1544px;top:883px" width="20" height="12" viewBox="0 0 20 12"><path d="M1.2 1.5L10 9.8L18.8 1.5" stroke="#1f72b8" stroke-width="2.2" fill="none" stroke-linecap="round" stroke-linejoin="round"/></svg>
<div style="position:absolute;left:328px;top:918px;width:1258px;height:44px;background:#fff;box-shadow:2px 2px 4px rgba(0,0,0,.12),0 0 1px rgba(0,0,0,.07)"></div>
<div style="position:absolute;top:934px;font-size:16.82px;line-height:20px;font-weight:bold;color:#2e3b48;white-space:nowrap;left:340.70px;transform:scaleY(1.1);transform-origin:0 15px;-webkit-text-stroke:0.3px #2e3b48;">Seznam e-tržišť zadavatele</div>
<div style="position:absolute;left:328px;top:959px;width:1258px;height:3px;background:#1a6fb3"></div>
<svg style="position:absolute;left:1544px;top:937px" width="20" height="12" viewBox="0 0 20 12"><path d="M1.2 1.5L10 9.8L18.8 1.5" stroke="#1f72b8" stroke-width="2.2" fill="none" stroke-linecap="round" stroke-linejoin="round"/></svg></div></body></html>
